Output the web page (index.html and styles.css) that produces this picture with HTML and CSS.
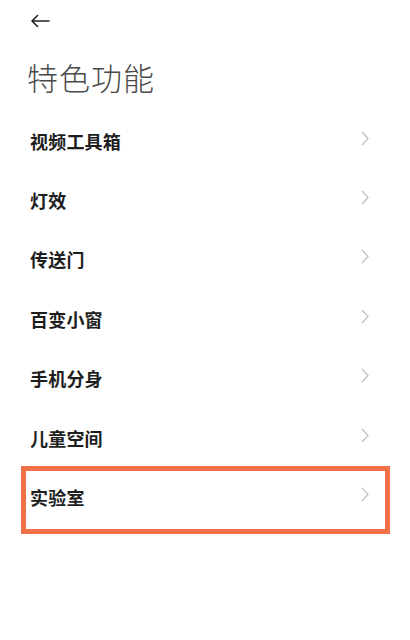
FILE: index.html
```html
<!DOCTYPE html>
<html lang="zh-CN">
<head>
<meta charset="utf-8">
<link rel="stylesheet" href="styles.css">
</head>
<body>
<div class="page">
  <header class="topbar">
    <svg class="back" width="20" height="14" viewBox="0 0 20 14"><path d="M19 7H2M7.5 1.5L2 7l5.5 5.5" fill="none" stroke="#222" stroke-width="1.6" stroke-linecap="round" stroke-linejoin="round"/></svg>
  </header>
  <h1 class="title">特色功能</h1>
  <ul class="list">
    <li class="row"><span class="label">视频工具箱</span><svg class="chev" width="8" height="15" viewBox="0 0 8 15"><path d="M1 1l6 6.5L1 14" fill="none" stroke="#c4c4c4" stroke-width="1.4"/></svg></li>
    <li class="row"><span class="label">灯效</span><svg class="chev" width="8" height="15" viewBox="0 0 8 15"><path d="M1 1l6 6.5L1 14" fill="none" stroke="#c4c4c4" stroke-width="1.4"/></svg></li>
    <li class="row"><span class="label">传送门</span><svg class="chev" width="8" height="15" viewBox="0 0 8 15"><path d="M1 1l6 6.5L1 14" fill="none" stroke="#c4c4c4" stroke-width="1.4"/></svg></li>
    <li class="row"><span class="label">百变小窗</span><svg class="chev" width="8" height="15" viewBox="0 0 8 15"><path d="M1 1l6 6.5L1 14" fill="none" stroke="#c4c4c4" stroke-width="1.4"/></svg></li>
    <li class="row"><span class="label">手机分身</span><svg class="chev" width="8" height="15" viewBox="0 0 8 15"><path d="M1 1l6 6.5L1 14" fill="none" stroke="#c4c4c4" stroke-width="1.4"/></svg></li>
    <li class="row"><span class="label">儿童空间</span><svg class="chev" width="8" height="15" viewBox="0 0 8 15"><path d="M1 1l6 6.5L1 14" fill="none" stroke="#c4c4c4" stroke-width="1.4"/></svg></li>
    <li class="row highlighted"><span class="label">实验室</span><svg class="chev" width="8" height="15" viewBox="0 0 8 15"><path d="M1 1l6 6.5L1 14" fill="none" stroke="#c4c4c4" stroke-width="1.4"/></svg><span class="mark"></span></li>
  </ul>
</div>
</body>
</html>
```
FILE: styles.css
```css
html, body {
  margin: 0;
  padding: 0;
  background: #ffffff;
}
body {
  font-family: "Noto Sans CJK SC", "Noto Sans", sans-serif;
  color: #1c1c1c;
}
.page {
  width: 410px;
  height: 640px;
  overflow: hidden;
}
.topbar {
  height: 42px;
  display: flex;
  align-items: center;
  padding-left: 30px;
}
.back {
  display: block;
  margin-top: -1px;
}
.title {
  margin: 0;
  padding-left: 27px;
  height: 69px;
  line-height: 70px;
  font-size: 31px;
  font-weight: 300;
  color: #4a4a4a;
  letter-spacing: 1px;
}
.list {
  list-style: none;
  margin: 0;
  padding: 0;
}
.row {
  position: relative;
  height: 59.4px;
  display: flex;
  align-items: center;
  justify-content: space-between;
  padding: 0 41px 0 30px;
}
.label {
  font-size: 18px;
  font-weight: 700;
  color: #1e1e1e;
  letter-spacing: 0.2px;
}
.chev {
  display: block;
  margin-top: -5px;
}
.mark {
  position: absolute;
  left: 21px;
  right: 20px;
  top: -1px;
  bottom: -7px;
  border: 5px solid #f07048;
}
```
